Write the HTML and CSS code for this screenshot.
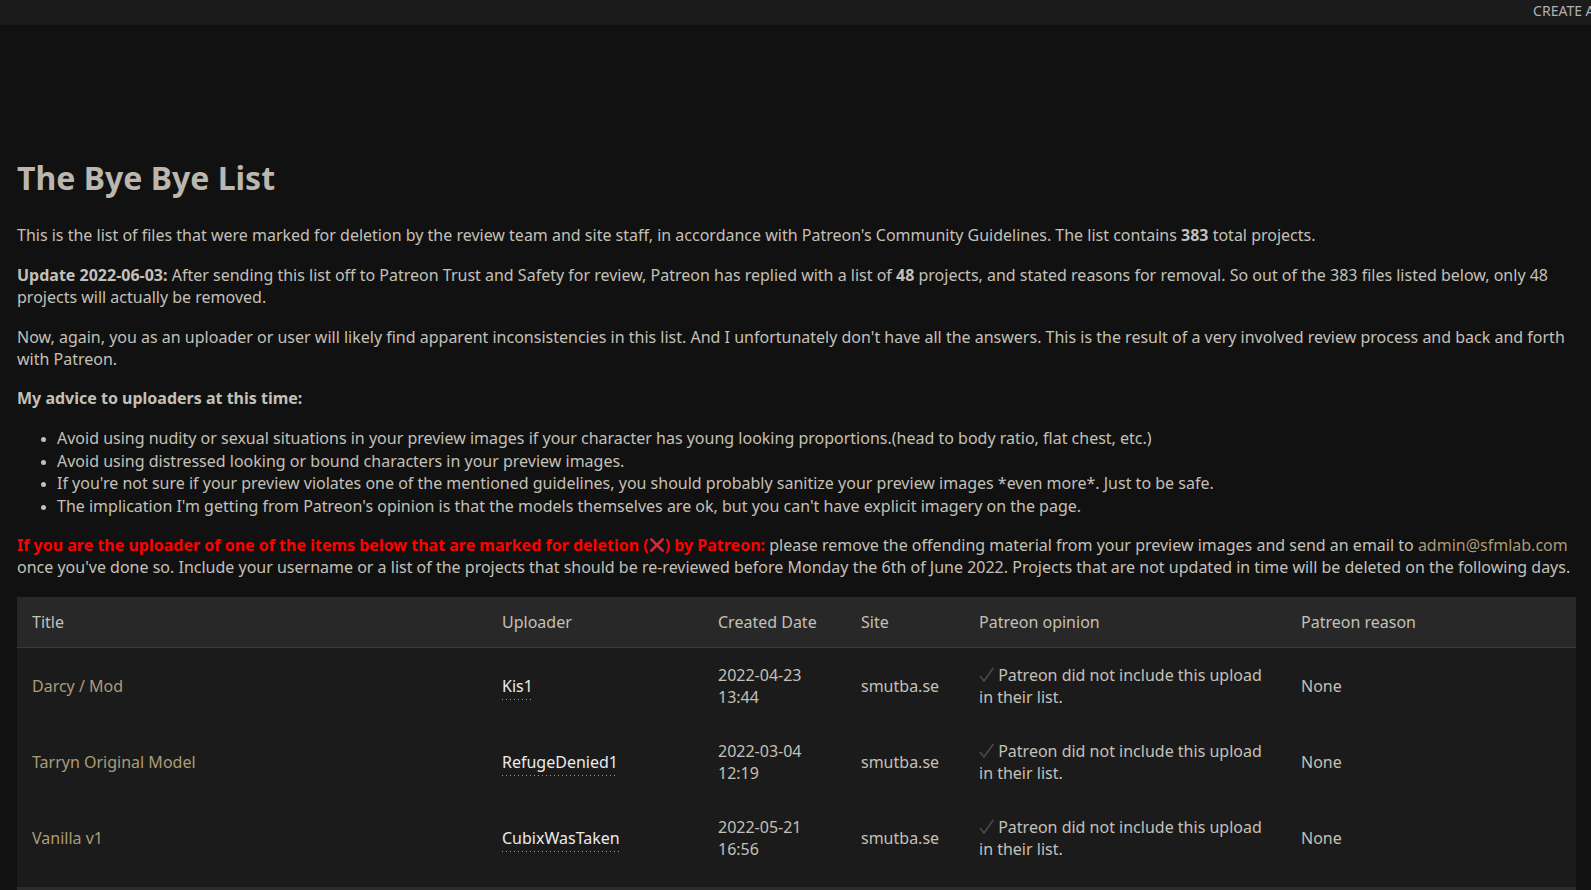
FILE: index.html
```html
<!DOCTYPE html>
<html lang="en">
<head>
<meta charset="utf-8">
<title>The Bye Bye List</title>
<link rel="stylesheet" href="styles.css">
</head>
<body>
<header class="topbar">
  <nav class="topnav"><a class="navlink" href="#">CREATE ACCOUNT</a></nav>
</header>
<main class="content">
  <h1 class="title">The Bye Bye List</h1>
  <p class="para">This is the list of files that were marked for deletion by the review team and site staff, in accordance with Patreon's Community Guidelines. The list contains <b>383</b> total projects.</p>
  <p class="para"><b>Update 2022-06-03:</b> After sending this list off to Patreon Trust and Safety for review, Patreon has replied with a list of <b>48</b> projects, and stated reasons for removal. So out of the 383 files listed below, only 48 projects will actually be removed.</p>
  <p class="para">Now, again, you as an uploader or user will likely find apparent inconsistencies in this list. And I unfortunately don't have all the answers. This is the result of a very involved review process and back and forth with Patreon.</p>
  <p class="para"><b>My advice to uploaders at this time:</b></p>
  <ul class="advice">
    <li>Avoid using nudity or sexual situations in your preview images if your character has young looking proportions.(head to body ratio, flat chest, etc.)</li>
    <li>Avoid using distressed looking or bound characters in your preview images.</li>
    <li>If you're not sure if your preview violates one of the mentioned guidelines, you should probably sanitize your preview images *even more*. Just to be safe.</li>
    <li>The implication I'm getting from Patreon's opinion is that the models themselves are ok, but you can't have explicit imagery on the page.</li>
  </ul>
  <p class="para"><b class="warn">If you are the uploader of one of the items below that are marked for deletion (<svg class="xmark" viewBox="0 0 16 16" width="16" height="16"><path d="M2.3 2.3 L13.7 13.7 M13.7 2.3 L2.3 13.7" stroke="#d8283e" stroke-width="2.6" stroke-linecap="round"/></svg>) by Patreon:</b> please remove the offending material from your preview images and send an email to <a class="link" href="#">admin@sfmlab.com</a> once you've done so. Include your username or a list of the projects that should be re-reviewed before Monday the 6th of June 2022. Projects that are not updated in time will be deleted on the following days.</p>

  <table class="list">
    <colgroup>
      <col class="c-title"><col class="c-up"><col class="c-date"><col class="c-site"><col class="c-op"><col class="c-reason">
    </colgroup>
    <thead>
      <tr><th>Title</th><th>Uploader</th><th>Created Date</th><th>Site</th><th>Patreon opinion</th><th>Patreon reason</th></tr>
    </thead>
    <tbody>
      <tr>
        <td><a class="link" href="#">Darcy / Mod</a></td>
        <td><span class="user">Kis1</span></td>
        <td>2022-04-23 13:44</td>
        <td>smutba.se</td>
        <td><svg class="check" viewBox="0 0 15 16" width="15" height="16"><path d="M1.5 9.5 L5 14 L14 1.5" fill="none" stroke="#4a4a4a" stroke-width="1.6" stroke-linecap="round" stroke-linejoin="round"/></svg> Patreon did not include this upload in their list.</td>
        <td>None</td>
      </tr>
      <tr>
        <td><a class="link" href="#">Tarryn Original Model</a></td>
        <td><span class="user">RefugeDenied1</span></td>
        <td>2022-03-04 12:19</td>
        <td>smutba.se</td>
        <td><svg class="check" viewBox="0 0 15 16" width="15" height="16"><path d="M1.5 9.5 L5 14 L14 1.5" fill="none" stroke="#4a4a4a" stroke-width="1.6" stroke-linecap="round" stroke-linejoin="round"/></svg> Patreon did not include this upload in their list.</td>
        <td>None</td>
      </tr>
      <tr>
        <td><a class="link" href="#">Vanilla v1</a></td>
        <td><span class="user">CubixWasTaken</span></td>
        <td>2022-05-21 16:56</td>
        <td>smutba.se</td>
        <td><svg class="check" viewBox="0 0 15 16" width="15" height="16"><path d="M1.5 9.5 L5 14 L14 1.5" fill="none" stroke="#4a4a4a" stroke-width="1.6" stroke-linecap="round" stroke-linejoin="round"/></svg> Patreon did not include this upload in their list.</td>
        <td>None</td>
      </tr>
      <tr class="spacer">
        <td></td><td></td><td></td><td></td><td></td><td></td>
      </tr>
    </tbody>
  </table>
</main>
</body>
</html>
```

FILE: styles.css
```css
html, body {
  margin: 0;
  padding: 0;
  background: #111111;
  color: #c4c0b8;
  font-family: "Noto Sans", "Open Sans", sans-serif;
  font-size: 16px;
  line-height: 1.4;
  overflow: hidden;
}

.topbar {
  height: 25px;
  background: #1b1b1b;
  display: flex;
  justify-content: flex-end;
  overflow: hidden;
}

.topnav {
  display: flex;
  align-items: center;
  margin-right: -60px;
  padding-bottom: 3px;
}

.navlink {
  color: #b0b0b0;
  text-decoration: none;
  font-size: 14px;
  white-space: nowrap;
}

.content {
  padding: 134px 15px 0 17px;
}

.title {
  margin: 0 0 27px 0;
  font-size: 32px;
  line-height: 1.2;
  font-weight: 700;
  color: #bbb6ae;
}

.para {
  margin: 0 0 17px 0;
}

.para b {
  font-weight: 700;
}

.warn {
  color: #ff0000;
}

.xmark {
  vertical-align: -2px;
}

.link {
  color: #ad9b76;
  text-decoration: none;
}

.advice {
  margin: 0 0 16px 0;
  padding-left: 40px;
}

.advice li {
  line-height: 22.8px;
}

.advice li::marker {
  font-size: 13px;
}

.list {
  width: 100%;
  border-collapse: collapse;
  table-layout: fixed;
  margin-top: 18px;
  background: #1b1b1b;
}

.c-title { width: 470px; }
.c-up { width: 216px; }
.c-date { width: 143px; }
.c-site { width: 118px; }
.c-op { width: 322px; }
.c-reason { width: auto; }

.list th {
  background: #282828;
  text-align: left;
  font-weight: 400;
  padding: 14px 15px 14px 15px;
  border-bottom: 1px solid #3a3a3a;
  color: #c4c0b8;
}

.list td {
  padding: 15.6px 15px 15.6px 15px;
  vertical-align: middle;
}

.list .spacer td {
  padding: 0;
  height: 11px;
  border-bottom: 3px solid #2c2c2c;
}

.user {
  color: #ebebeb;
  padding-bottom: 3px;
  background-image: linear-gradient(to right, #9a9a9a 1.5px, transparent 1.5px);
  background-size: 4px 1px;
  background-repeat: repeat-x;
  background-position: left bottom;
}

.check {
  vertical-align: -2px;
}
```
